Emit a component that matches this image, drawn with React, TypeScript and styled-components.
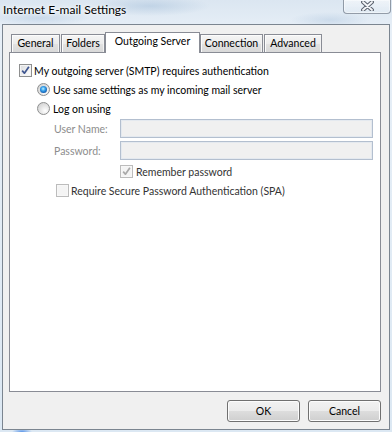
import React from "react";
import styled, { createGlobalStyle, css } from "styled-components";

const Global = createGlobalStyle`
  html, body { margin: 0; padding: 0; }
  body {
    font-family: Lato, "Liberation Sans", sans-serif;
    font-size: 10.5px;
    color: #000;
  }
  * { box-sizing: border-box; }
`;

const Window = styled.div`
  width: 392px;
  height: 432px;
  display: flex;
  flex-direction: column;
  padding: 0 2px 2px 2px;
  overflow: hidden;
  background:
    radial-gradient(ellipse 60px 10px at 150px 6px, rgba(170, 195, 220, 0.55), transparent),
    radial-gradient(ellipse 50px 8px at 40px 18px, rgba(175, 198, 222, 0.5), transparent),
    radial-gradient(ellipse 40px 8px at 330px 20px, rgba(175, 198, 222, 0.45), transparent),
    radial-gradient(ellipse 10px 4px at 22px 432px, rgba(60, 130, 230, 0.8), transparent),
    linear-gradient(180deg, #dbe6f1 0%, #e7eff7 30px, #dce8f3 100%);
`;

const TitleBar = styled.div`
  height: 24px;
  flex: none;
  display: flex;
  align-items: flex-start;
  justify-content: space-between;
`;

const Title = styled.div`
  font-size: 12px;
  line-height: 14px;
  padding: 3px 0 0 1px;
  color: #000;
  text-shadow: 0 0 6px #fff, 0 0 3px #fff;
`;

const CloseButton = styled.div`
  width: 48px;
  height: 15px;
  margin: -1px -1px 0 0;
  border: 1px solid rgba(70, 82, 100, 0.55);
  border-radius: 0 0 4px 4px;
  background: linear-gradient(180deg, rgba(255, 255, 255, 0.55), rgba(225, 235, 245, 0.35));
  box-shadow: inset 0 0 0 1px rgba(255, 255, 255, 0.45);
  display: flex;
  justify-content: center;
  align-items: flex-start;
  padding-top: 1px;
`;

const Client = styled.div`
  flex: 1;
  display: flex;
  flex-direction: column;
  background: #f0f0f0;
  border: 1px solid #7b8590;
  padding: 7px 8px 7px 6px;
`;

const TabStrip = styled.div`
  display: flex;
  align-items: flex-end;
  height: 21px;
  padding-left: 2px;
  position: relative;
  z-index: 1;
  flex: none;
`;

const Tab = styled.div<{ $w: number; $gap?: number; $active?: boolean }>`
  width: ${(p) => p.$w}px;
  margin-right: ${(p) => p.$gap ?? 0}px;
  flex: none;
  text-align: center;
  white-space: nowrap;
  border: 1px solid #898c95;
  border-bottom: none;
  ${(p) =>
    p.$active
      ? css`
          height: 21px;
          line-height: 17px;
          background: #fff;
        `
      : css`
          height: 18px;
          line-height: 16px;
          margin-bottom: 1px;
          background: linear-gradient(180deg, #f5f5f5 0%, #ececec 50%, #e2e2e2 51%, #d9d9d9 100%);
          box-shadow: inset 1px 1px 0 #fcfcfc, inset -1px 0 0 #f2f2f2;
        `}
`;

const Panel = styled.div`
  flex: 1;
  margin-top: -1px;
  background: #fff;
  border: 1px solid #898c95;
  padding: 8px 9px;
  display: flex;
  flex-direction: column;
`;

const OptionRow = styled.div<{ $indent: number; $gap: number; $top?: number; $dim?: boolean }>`
  display: flex;
  align-items: center;
  height: 19px;
  flex: none;
  padding-left: ${(p) => p.$indent}px;
  margin-top: ${(p) => p.$top ?? 0}px;
  gap: ${(p) => p.$gap}px;
  white-space: nowrap;
  color: ${(p) => (p.$dim ? "#333" : "#000")};
`;

const FieldRow = styled.div<{ $top: number }>`
  display: flex;
  align-items: center;
  height: 19px;
  flex: none;
  padding-left: 35px;
  margin-top: ${(p) => p.$top}px;
`;

const FieldLabel = styled.span`
  width: 66px;
  flex: none;
  color: #8d8d8d;
  white-space: nowrap;
`;

const TextInput = styled.div`
  width: 253px;
  height: 19px;
  flex: none;
  background: #f0f0f0;
  border: 1px solid #b3bfcf;
  box-shadow: inset 0 0 0 1px #e4e9ef;
`;

const Box = styled.span<{ $disabled?: boolean }>`
  width: 13px;
  height: 13px;
  flex: none;
  display: flex;
  align-items: center;
  justify-content: center;
  border: 1px solid ${(p) => (p.$disabled ? "#bcbcbc" : "#8e8f8f")};
  background: ${(p) =>
    p.$disabled ? "#f4f4f4" : "linear-gradient(135deg, #d9dbdd 0%, #f2f2f2 60%, #ffffff 100%)"};
  box-shadow: inset 0 0 0 1px ${(p) => (p.$disabled ? "#f7f7f7" : "#f4f4f4")};
`;

const Circle = styled.span<{ $checked?: boolean }>`
  width: 13px;
  height: 13px;
  flex: none;
  border-radius: 50%;
  position: relative;
  border: 1px solid #8e8f8f;
  background: radial-gradient(circle at 65% 70%, #ffffff 0%, #e6e6e6 45%, #c9c9c9 100%);
  ${(p) =>
    p.$checked &&
    css`
      &::after {
        content: "";
        position: absolute;
        left: 2px;
        top: 2px;
        width: 7px;
        height: 7px;
        border-radius: 50%;
        background: radial-gradient(circle at 45% 40%, #bdf0ff 0%, #3aa3ec 35%, #1461b5 70%, #0c3468 100%);
      }
    `}
`;

const ButtonRow = styled.div`
  display: flex;
  justify-content: flex-end;
  gap: 8px;
  margin-top: 8px;
  height: 22px;
  flex: none;
`;

const Button = styled.div`
  width: 73px;
  height: 22px;
  border: 1px solid #707070;
  border-radius: 3px;
  background: linear-gradient(180deg, #f2f2f2 0%, #ebebeb 50%, #dddddd 51%, #cfcfcf 100%);
  box-shadow: inset 0 0 0 1px #fcfcfc;
  text-align: center;
  line-height: 20px;
  color: #000;
`;

const Check = ({ color }: { color: string }) => (
  <svg width="11" height="11" viewBox="0 0 11 11">
    <path d="M2.2 5.6 L4.4 8.2 L8.9 1.8" fill="none" stroke={color} strokeWidth="1.7" strokeLinejoin="round" />
  </svg>
);

const CloseGlyph = () => (
  <svg width="13" height="10" viewBox="0 0 13 10">
    <path d="M2 1 L11 9 M11 1 L2 9" stroke="#5d6470" strokeWidth="4" strokeLinecap="round" fill="none" />
    <path d="M2 1 L11 9 M11 1 L2 9" stroke="#f4f6f9" strokeWidth="1.8" strokeLinecap="round" fill="none" />
  </svg>
);

export default function App() {
  return (
    <>
      <Global />
      <Window>
        <TitleBar>
          <Title>Internet E-mail Settings</Title>
          <CloseButton>
            <CloseGlyph />
          </CloseButton>
        </TitleBar>
        <Client>
          <TabStrip>
            <Tab $w={49} $gap={1}>General</Tab>
            <Tab $w={44}>Folders</Tab>
            <Tab $w={95} $active>Outgoing Server</Tab>
            <Tab $w={63} $gap={1}>Connection</Tab>
            <Tab $w={58}>Advanced</Tab>
          </TabStrip>
          <Panel>
            <OptionRow $indent={0} $gap={2}>
              <Box>
                <Check color="#3f5690" />
              </Box>
              <span>My outgoing server (SMTP) requires authentication</span>
            </OptionRow>
            <OptionRow $indent={18} $gap={3}>
              <Circle $checked />
              <span>Use same settings as my incoming mail server</span>
            </OptionRow>
            <OptionRow $indent={18} $gap={3}>
              <Circle />
              <span>Log on using</span>
            </OptionRow>
            <FieldRow $top={1}>
              <FieldLabel>User Name:</FieldLabel>
              <TextInput />
            </FieldRow>
            <FieldRow $top={3}>
              <FieldLabel>Password:</FieldLabel>
              <TextInput />
            </FieldRow>
            <OptionRow $indent={101} $gap={3} $top={2} $dim>
              <Box $disabled>
                <Check color="#a9a9a9" />
              </Box>
              <span>Remember password</span>
            </OptionRow>
            <OptionRow $indent={37} $gap={2} $dim>
              <Box $disabled />
              <span>Require Secure Password Authentication (SPA)</span>
            </OptionRow>
          </Panel>
          <ButtonRow>
            <Button>OK</Button>
            <Button>Cancel</Button>
          </ButtonRow>
        </Client>
      </Window>
    </>
  );
}
